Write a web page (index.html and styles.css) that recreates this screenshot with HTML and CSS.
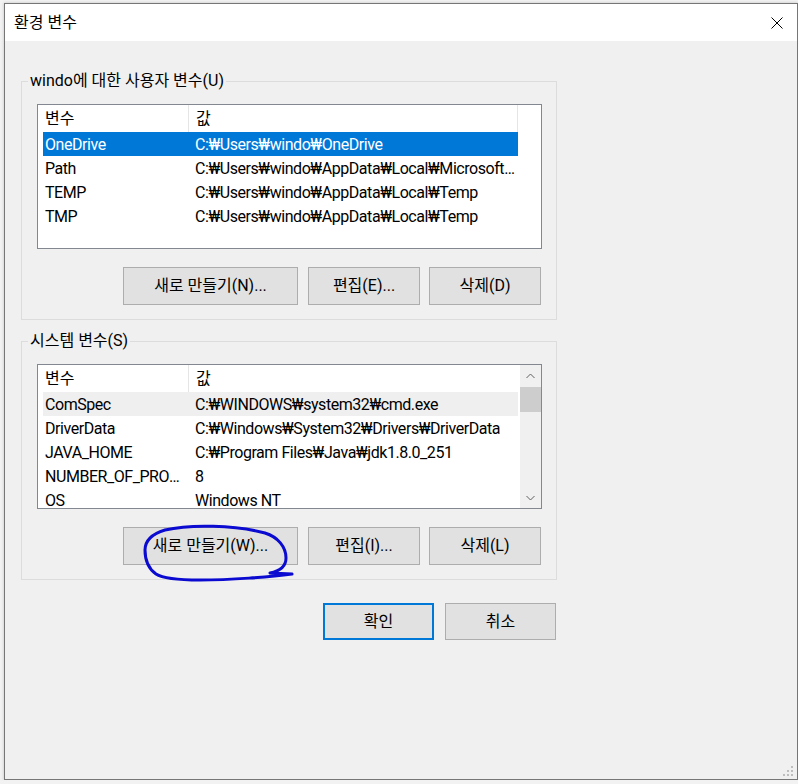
FILE: index.html
```html
<!DOCTYPE html>
<html lang="ko">
<head>
    <meta charset="UTF-8">
    <title>환경 변수</title>
    <link rel="stylesheet" href="styles.css">
</head>
<body>
    <div class="window">
        <!-- 제목 표시줄 -->
        <div class="titlebar">
            <span class="title">환경 변수</span>
            <div class="close-btn">
                <svg width="12" height="12" viewBox="0 0 12 12"><path d="M0.5 0.5L11.5 11.5M11.5 0.5L0.5 11.5" stroke="#000" stroke-width="1" fill="none"/></svg>
            </div>
        </div>

        <div class="client">
            <!-- 사용자 변수 -->
            <div class="group">
                <div class="group-title">windo에 대한 사용자 변수(U)</div>
                <div class="listview">
                    <div class="lv-body">
                        <div class="lv-head">
                            <div class="cell c1">변수</div>
                            <div class="cell c2">값</div>
                        </div>
                        <div class="lv-row selected">
                            <div class="cell c1">OneDrive</div>
                            <div class="cell c2">C:₩Users₩windo₩OneDrive</div>
                        </div>
                        <div class="lv-row">
                            <div class="cell c1">Path</div>
                            <div class="cell c2">C:₩Users₩windo₩AppData₩Local₩Microsoft₩WindowsApps</div>
                        </div>
                        <div class="lv-row">
                            <div class="cell c1">TEMP</div>
                            <div class="cell c2">C:₩Users₩windo₩AppData₩Local₩Temp</div>
                        </div>
                        <div class="lv-row">
                            <div class="cell c1">TMP</div>
                            <div class="cell c2">C:₩Users₩windo₩AppData₩Local₩Temp</div>
                        </div>
                    </div>
                </div>
                <div class="btn-row">
                    <button class="btn btn-wide">새로 만들기(N)...</button>
                    <button class="btn">편집(E)...</button>
                    <button class="btn">삭제(D)</button>
                </div>
            </div>

            <!-- 시스템 변수 -->
            <div class="group">
                <div class="group-title">시스템 변수(S)</div>
                <div class="listview">
                    <div class="lv-body">
                        <div class="lv-head">
                            <div class="cell c1">변수</div>
                            <div class="cell c2 no-sep">값</div>
                        </div>
                        <div class="lv-row hot">
                            <div class="cell c1">ComSpec</div>
                            <div class="cell c2">C:₩WINDOWS₩system32₩cmd.exe</div>
                        </div>
                        <div class="lv-row">
                            <div class="cell c1">DriverData</div>
                            <div class="cell c2">C:₩Windows₩System32₩Drivers₩DriverData</div>
                        </div>
                        <div class="lv-row">
                            <div class="cell c1">JAVA_HOME</div>
                            <div class="cell c2">C:₩Program Files₩Java₩jdk1.8.0_251</div>
                        </div>
                        <div class="lv-row">
                            <div class="cell c1">NUMBER_OF_PROCESSORS</div>
                            <div class="cell c2">8</div>
                        </div>
                        <div class="lv-row">
                            <div class="cell c1">OS</div>
                            <div class="cell c2">Windows NT</div>
                        </div>
                    </div>
                    <div class="scrollbar">
                        <div class="sb-btn">
                            <svg width="9" height="6" viewBox="0 0 9 6"><path d="M0.5 5L4.5 1L8.5 5" stroke="#606060" fill="none"/></svg>
                        </div>
                        <div class="sb-thumb"></div>
                        <div class="sb-track"></div>
                        <div class="sb-btn">
                            <svg width="9" height="6" viewBox="0 0 9 6"><path d="M0.5 1L4.5 5L8.5 1" stroke="#606060" fill="none"/></svg>
                        </div>
                    </div>
                </div>
                <div class="btn-row">
                    <button class="btn btn-wide">새로 만들기(W)...</button>
                    <button class="btn">편집(I)...</button>
                    <button class="btn">삭제(L)</button>
                </div>
            </div>

            <div class="dialog-buttons">
                <button class="btn btn-dlg default">확인</button>
                <button class="btn btn-dlg">취소</button>
            </div>
        </div>

        <!-- 손으로 그린 표시 -->
        <svg class="scribble" viewBox="0 0 798 784">
            <path d="M292 574 C270 577 230 580 200 580 C180 580 162 578 156 574 C149 569 145 560 145 550 C145 541 152 534 165 530 C190 524 235 525 265 533 C278 537 286 547 286 558 C286 566 280 571 270 573 L292 574"
                  stroke="#0a0ad0" stroke-width="3" fill="none" stroke-linecap="round" stroke-linejoin="round"/>
        </svg>

        <svg class="grip" width="12" height="12" viewBox="0 0 12 12">
            <rect x="8" y="0" width="2" height="2" fill="#bdbdbd"/>
            <rect x="4" y="4" width="2" height="2" fill="#bdbdbd"/>
            <rect x="8" y="4" width="2" height="2" fill="#bdbdbd"/>
            <rect x="0" y="8" width="2" height="2" fill="#bdbdbd"/>
            <rect x="4" y="8" width="2" height="2" fill="#bdbdbd"/>
            <rect x="8" y="8" width="2" height="2" fill="#bdbdbd"/>
        </svg>
    </div>
</body>
</html>
```

FILE: styles.css
```css
* {
    box-sizing: border-box;
}
body {
    margin: 0;
    background: #f2f2f2;
    font-family: Roboto, "Noto Sans CJK KR", sans-serif;
    font-size: 16px;
    color: #000;
}
.window {
    position: relative;
    margin: 3px 0 0 4px;
    width: 794px;
    height: 777px;
    border: 1px solid #767676;
    background: #f0f0f0;
    box-shadow: 0 0 3px rgba(0, 0, 0, 0.2);
}
.titlebar {
    height: 37px;
    background: #fff;
    display: flex;
    align-items: center;
    justify-content: space-between;
    padding-left: 9px;
}
.title {
    line-height: 20px;
}
.close-btn {
    width: 40px;
    height: 37px;
    display: flex;
    align-items: center;
    justify-content: center;
}
.client {
    padding: 40px 0 0 16px;
}
.group {
    width: 536px;
    border: 1px solid #dcdcdc;
    padding: 0 14px 14px 15px;
}
.group + .group {
    margin-top: 21px;
}
.group-title {
    width: fit-content;
    margin: -11px 0 0 -9px;
    padding: 0 2px;
    background: #f0f0f0;
    line-height: 20px;
}
.listview {
    margin-top: 13px;
    height: 145px;
    border: 1px solid #828790;
    background: #fff;
    display: flex;
    overflow: hidden;
}
.lv-body {
    flex: 1;
    padding-left: 5px;
    overflow: hidden;
}
.lv-head {
    display: flex;
    height: 27px;
}
.lv-head .cell {
    height: 27px;
    padding-top: 4px;
    border-right: 1px solid #e5e5e5;
}
.lv-head .no-sep {
    border-right: none;
}
.lv-row {
    display: flex;
    width: 475px;
    height: 24px;
    padding-top: 3px;
}
.lv-row .cell {
    letter-spacing: -0.45px;
}
.lv-row.selected {
    background: #0078d7;
    color: #fff;
}
.lv-row.hot {
    background: #efefef;
}
.cell {
    white-space: nowrap;
    overflow: hidden;
    text-overflow: ellipsis;
    line-height: 20px;
}
.c1 {
    width: 146px;
    flex: none;
    padding: 0 0 0 2px;
}
.c2 {
    width: 329px;
    flex: none;
    padding: 0 3px 0 6px;
}
.lv-head .c2 {
    padding-left: 7px;
}
.scrollbar {
    width: 21px;
    flex: none;
    background: #f0f0f0;
    display: flex;
    flex-direction: column;
}
.sb-btn {
    height: 21px;
    display: flex;
    align-items: center;
    justify-content: center;
}
.sb-thumb {
    height: 25px;
    margin-top: 1px;
    background: #cdcdcd;
}
.sb-track {
    flex: 1;
}
.btn-row {
    display: flex;
    justify-content: flex-end;
    gap: 9px;
    margin-top: 18px;
    padding-right: 1px;
}
.btn {
    width: 112px;
    height: 38px;
    background: #e1e1e1;
    border: 1px solid #adadad;
    font: inherit;
    line-height: 20px;
    color: #000;
    padding: 0;
}
.btn-wide {
    width: 175px;
    margin-right: 1px;
}
.dialog-buttons {
    display: flex;
    justify-content: flex-end;
    gap: 11px;
    width: 535px;
    margin-top: 23px;
}
.btn-dlg {
    width: 111px;
    height: 37px;
}
.btn.default {
    border: 2px solid #0078d7;
}
.scribble {
    position: absolute;
    left: -5px;
    top: -4px;
    width: 798px;
    height: 784px;
    pointer-events: none;
}
.grip {
    position: absolute;
    right: 2px;
    bottom: 1px;
}
```
